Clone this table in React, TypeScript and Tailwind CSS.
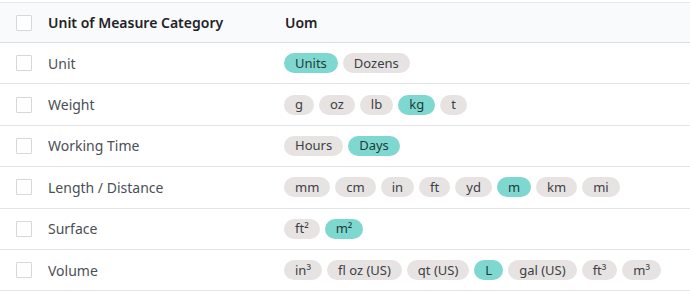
import React from "react";

type B = { t: string; on?: boolean };
const rows: { name: string; uoms: B[] }[] = [
  { name: "Unit", uoms: [{ t: "Units", on: true }, { t: "Dozens" }] },
  { name: "Weight", uoms: [{ t: "g" }, { t: "oz" }, { t: "lb" }, { t: "kg", on: true }, { t: "t" }] },
  { name: "Working Time", uoms: [{ t: "Hours" }, { t: "Days", on: true }] },
  {
    name: "Length / Distance",
    uoms: [{ t: "mm" }, { t: "cm" }, { t: "in" }, { t: "ft" }, { t: "yd" }, { t: "m", on: true }, { t: "km" }, { t: "mi" }],
  },
  { name: "Surface", uoms: [{ t: "ft²" }, { t: "m²", on: true }] },
  {
    name: "Volume",
    uoms: [{ t: "in³" }, { t: "fl oz (US)" }, { t: "qt (US)" }, { t: "L", on: true }, { t: "gal (US)" }, { t: "ft³" }, { t: "m³" }],
  },
];

function Box() {
  return <div className="w-4 h-4 border border-[#d6d9dc] bg-white rounded-[1px] shrink-0" />;
}

export default function App() {
  return (
    <div
      className="w-[690px] h-[293px] bg-white overflow-hidden pt-[2px]"
      style={{ fontFamily: '"Noto Sans", "Open Sans", sans-serif' }}
    >
      <div className="border-t border-[#e6e8ea]">
        <div className="flex items-center h-[40px] bg-[#f9fafb] border-b border-[#dcdfe2]">
          <div className="w-[270px] flex items-center pl-4 gap-4 shrink-0">
            <Box />
            <span className="text-[14px] font-semibold text-[#1f2327]">Unit of Measure Category</span>
          </div>
          <div className="pl-[15px] text-[14px] font-semibold text-[#1f2327]">Uom</div>
        </div>
        {rows.map((r) => (
          <div key={r.name} className="flex items-center h-[41.4px] border-b border-[#e2e5e8]">
            <div className="w-[270px] flex items-center pl-4 gap-4 shrink-0">
              <Box />
              <span className="text-[14px] text-[#4a4f55]">{r.name}</span>
            </div>
            <div className="pl-[14px] flex items-center gap-[5px]">
              {r.uoms.map((u) => (
                <span
                  key={u.t}
                  className={
                    "h-[20px] px-[11px] rounded-full flex items-center text-[13px] leading-none " +
                    (u.on ? "bg-[#7fd8cf] text-[#1e3b3a]" : "bg-[#e7e3e2] text-[#3c4044]")
                  }
                >
                  {u.t}
                </span>
              ))}
            </div>
          </div>
        ))}
      </div>
    </div>
  );
}
